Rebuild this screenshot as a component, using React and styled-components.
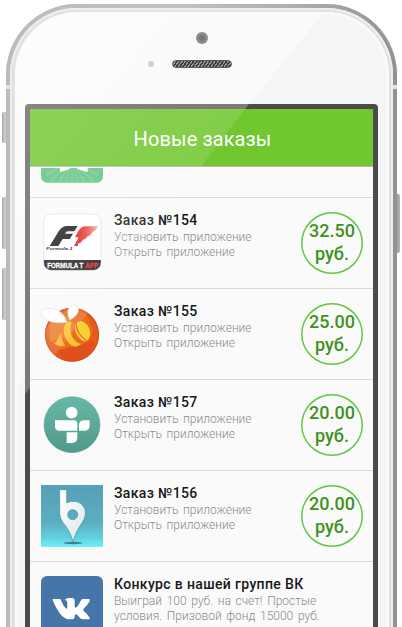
import React from "react";
import styled, { createGlobalStyle } from "styled-components";

const GlobalStyle = createGlobalStyle`
  html, body { margin: 0; padding: 0; background: #fff; }
  body { overflow: hidden; font-family: Roboto, "Liberation Sans", sans-serif; }
  * { box-sizing: border-box; }
`;

const Stage = styled.main`
  position: relative;
  width: 402px;
  height: 627px;
  padding: 4px 5px 0 6px;
  overflow: hidden;
  background: #fff;
`;

const SideButton = styled.i`
  position: absolute;
  ${(p) => (p.$right ? "right: 2px;" : "left: 2px;")}
  top: ${(p) => p.$top}px;
  width: 6px;
  height: ${(p) => p.$height}px;
  border-radius: 2px;
  background: ${(p) =>
    p.$right
      ? "linear-gradient(to left, #b4b4b4, #898989)"
      : "linear-gradient(to right, #a4a4a4, #d2d2d2 50%, #999)"};
`;

const Antenna = styled.i`
  position: absolute;
  ${(p) => (p.$right ? "right: 5px;" : "left: 6px;")}
  top: 85px;
  width: 4px;
  height: 4px;
  background: #e2e2e2;
`;

const Shell = styled.div`
  position: relative;
  height: 700px;
  padding: 4px 4px 0;
  border-radius: 71px 71px 0 0;
  background: linear-gradient(to right, #bcbcbc, #c2c2c2 45%, #adadad 75%, #929292);
  box-shadow: inset 0 0 1px #999;
`;

const Rim = styled.div`
  height: 100%;
  padding: 4px 4px 0 5px;
  border-radius: 67px 67px 0 0;
  background: #e4e4e4;
  box-shadow: inset 0 0 0 2px #eeeeee, inset 0 0 0 3px #dedede;
`;

const Face = styled.div`
  height: 100%;
  padding: 0 10px;
  border-radius: 63px 63px 0 0;
  background: linear-gradient(129.2deg, #fcfcfc 0, #fafafa 239px, #f5f5f5 240.5px);
  box-shadow: inset 0 0 3px 2px #fcfcfc;
`;

const Sensors = styled.div`
  display: grid;
  grid-template: 12px 1fr / 1fr 60px 1fr;
  height: 92px;
  padding-top: 20px;
  row-gap: 13px;
  justify-items: center;
`;

const Camera = styled.span`
  grid-area: 1 / 2;
  width: 12px;
  height: 12px;
  border-radius: 50%;
  background: radial-gradient(circle, #777 0 2px, #8b8b8b 4px, #949494);
`;

const Proximity = styled.span`
  grid-area: 2 / 1;
  justify-self: end;
  width: 6px;
  height: 6px;
  margin: 4px 18px 0 0;
  border-radius: 50%;
  background: #d2d2d2;
`;

const Speaker = styled.span`
  grid-area: 2 / 2;
  width: 60px;
  height: 8px;
  margin-top: 3px;
  border: 1px solid #5c5c5c;
  border-radius: 4px;
  background: repeating-linear-gradient(125deg, #3c3c3c 0 1.5px, #9a9a9a 1.5px 2.7px);
`;

const Bezel = styled.div`
  width: 353px;
  height: 560px;
  padding: 5px 5px 0;
  border-radius: 4px 4px 0 0;
  background: #4b4b4b;
`;

const Screen = styled.div`
  height: 555px;
  overflow: hidden;
  background: #fafafa;
`;

const Header = styled.header`
  position: relative;
  z-index: 1;
  display: flex;
  align-items: center;
  justify-content: center;
  height: 58px;
  background: #71c72f;
  border-bottom: 1px solid #b8b3bd;
  box-shadow: 0 1px 0 #fff;
`;

const HeaderTitle = styled.h1`
  margin: 3px 0 0 2px;
  color: #fff;
  font-size: 20px;
  font-weight: 400;
  letter-spacing: 0.1px;
  line-height: 24px;
  white-space: nowrap;
`;

const List = styled.ul`
  margin: -60px 0 0;
  padding: 0;
  list-style: none;
`;

const Row = styled.li`
  display: flex;
  height: 91px;
  padding: 14px 10px 0 11px;
  border-bottom: 1px solid #dcd7d5;
`;

const Icon = styled.svg`
  flex: none;
  width: 62px;
  height: 62px;
`;

const Details = styled.div`
  flex: 1;
  min-width: 0;
  padding-left: 11px;
`;

const OrderTitle = styled.h2`
  margin: 0 0 2px;
  color: #181818;
  font-size: 14px;
  font-weight: 500;
  letter-spacing: 0.35px;
  line-height: 16px;
  white-space: nowrap;
`;

const Task = styled.p`
  margin: 0;
  color: #8a8a8a;
  font-size: 12px;
  font-weight: 300;
  word-spacing: 1.7px;
  line-height: 15px;
  white-space: nowrap;
`;

const Price = styled.div`
  flex: none;
  width: 62px;
  height: 62px;
  padding-top: 7px;
  box-shadow: inset 0 0 0 1.5px #62c744;
  border-radius: 50%;
  color: #3f9220;
  font-size: 18px;
  font-weight: 500;
  line-height: 23px;
  text-align: center;
`;

const Glare = styled.div`
  position: absolute;
  z-index: 2;
  left: 25px;
  top: 104px;
  width: 224px;
  height: 290px;
  pointer-events: none;
  clip-path: polygon(0 0, 100% 0, 0 100%);
  background: linear-gradient(128deg, rgba(255, 255, 255, 0.2), rgba(255, 255, 255, 0.1) 62%);
`;

const BezelGlare = styled(Glare)`
  clip-path: polygon(0 0, 100% 0, 98.3% 1.72%, 5px 1.72%, 5px 97.8%, 0 100%);
  border-radius: 4px 0 0 0;
  background: rgba(255, 255, 255, 0.16);
`;

const SunburstIcon = () => (
  <Icon viewBox="123 78 186 186">
    <rect x="123" y="78" width="186" height="185" rx="18" fill="#5fc282" />
    {[-75, -60, -45, -30, -15, 0, 15, 30, 45, 60, 75].map((a) => (
      <path key={a} d="M216 195l-4 90h8z" fill="#83d09a" opacity=".6" transform={`rotate(${a} 216 195)`} />
    ))}
    <path d="M177 190H263V231Q240 227 220 215Q202 227 180 231Z" fill="#fff" />
  </Icon>
);

const FormulaIcon = () => (
  <Icon viewBox="123 36 186 186">
    <defs>
      <clipPath id="f1tile"><rect x="131" y="42" width="172" height="169" rx="23" /></clipPath>
      <linearGradient id="f1red"><stop offset="0" stopColor="#d91c17" /><stop offset=".5" stopColor="#e5473c" /><stop offset="1" stopColor="#f6b7ae" /></linearGradient>
    </defs>
    <g clipPath="url(#f1tile)">
      <rect x="130" y="41" width="174" height="171" fill="#fff" />
      <rect x="130" y="180" width="174" height="32" fill="#272528" />
    </g>
    <rect x="131" y="42" width="172" height="169" rx="23" fill="none" stroke="#ccc" strokeWidth="1.5" />
    <path d="M149 138L176 94Q186 78 202 78H233L223 94H204Q198 94 195 101H219L209 117H188L175 138Z" fill="#242225" />
    <path d="M222 138L236 112H225L235 94Q243 79 256 79H295L283 94H280L269 107H265L255 118H251L240 130H234V138Z" fill="url(#f1red)" />
    <text x="138" y="151" textLength="80" lengthAdjust="spacingAndGlyphs" fontFamily="Liberation Sans" fontStyle="italic" fontWeight="700" fontSize="13" fill="#222">Formula 1</text>
    <text x="142" y="203" textLength="108" lengthAdjust="spacingAndGlyphs" fontFamily="Liberation Sans" fontWeight="700" fontSize="20" stroke="#fff" strokeWidth=".8" fill="#fff">FORMULA T</text>
    <text x="256" y="203" textLength="39" lengthAdjust="spacingAndGlyphs" fontFamily="Liberation Sans" fontWeight="700" fontSize="20" stroke="#e42a2a" strokeWidth=".8" fill="#e42a2a">APP</text>
  </Icon>
);

const BeeIcon = () => (
  <Icon viewBox="123 39 186 186">
    <defs>
      <clipPath id="beeball"><circle cx="216" cy="134" r="81" /></clipPath>
    </defs>
    <g clipPath="url(#beeball)">
      <path d="M130 50h170v170H130z" fill="#e65b1c" />
      <path d="M135 110l80-60 45 20 20 55-40 60-55-5-50-40z" fill="#ea6c22" />
      <path d="M150 95l50-15 32 25-30 32-52 18z" fill="#e98230" />
      <path d="M170 182l115-30-20 55-70 5z" fill="#e1501a" />
    </g>
    <circle cx="216" cy="134" r="79" fill="none" stroke="#d9501b" strokeWidth="4" />
    <path d="M184 127Q183 150 196 168Q178 171 164 161Q173 149 184 127Z" fill="#fbb52b" />
    <path d="M198 99Q187 113 193 135Q201 163 224 170Q238 169 243 162Q232 159 225 152Q205 132 214 95Q205 94 198 99Z" fill="#fcc62e" />
    <ellipse cx="248" cy="123" rx="21" ry="31" transform="rotate(-24 248 123)" fill="#fbd034" />
    <path d="M228 99Q230 134 258 150" stroke="#e8702a" strokeWidth="4" fill="none" />
    <path d="M201 97Q192 62 158 56Q126 51 124 69Q124 86 152 95Q178 101 201 97Z" fill="#fff" stroke="#d7d1cc" strokeWidth="1.5" />
    <path d="M209 90Q195 60 213 48Q230 38 236 56Q236 77 209 90Z" fill="#fff" stroke="#d7d1cc" strokeWidth="1.5" />
  </Icon>
);

const FigureIcon = () => (
  <Icon viewBox="123 42 186 186">
    <defs>
      <linearGradient id="figbg" x2="0" y2="1"><stop stopColor="#67b8a7" /><stop offset="1" stopColor="#519a8c" /></linearGradient>
    </defs>
    <circle cx="216" cy="134" r="84" fill="url(#figbg)" stroke="#519d8e" strokeWidth="1.5" />
    <circle cx="215" cy="98" r="17.5" fill="#fff" />
    <path d="M165 121H222Q232 122 232 132V152H177Q166 151 165 140Z" fill="#fff" />
    <path d="M237 152V135Q238 122 250 121H269V138Q268 151 255 152Z" fill="#fff" />
    <path d="M200 157H232V174Q231 188 217 189H200Z" fill="#fff" />
  </Icon>
);

const PinIcon = () => (
  <Icon viewBox="123 45 186 186">
    <defs>
      <linearGradient id="pinbg" x2="0" y2="1"><stop stopColor="#56a0b8" /><stop offset=".6" stopColor="#5cadbf" /><stop offset=".85" stopColor="#61d0df" /><stop offset="1" stopColor="#70f0fa" /></linearGradient>
      <linearGradient id="pinfg" x2="1" y2="1"><stop stopColor="#fff" /><stop offset="1" stopColor="#dce7ea" /></linearGradient>
    </defs>
    <rect x="123" y="45" width="186" height="186" fill="url(#pinbg)" />
    <ellipse cx="219" cy="219" rx="29" ry="3.5" fill="#397f91" />
    <path fillRule="evenodd" d="M179 59H200V98Q232 87 249 107Q264 127 249 154Q226 186 219 215Q211 183 189 158Q179 145 179 130ZM218 119a15 15 0 1 0 .1 0Z" fill="url(#pinfg)" stroke="#478d9d" strokeWidth="2" />
  </Icon>
);

const VkIcon = () => (
  <Icon viewBox="123 318 186 186">
    <rect x="123" y="318" width="186" height="186" rx="18" fill="#4575a9" />
    <path d="M159 387H179Q182 387 183 391Q189 407 197 415Q202 419 202 411V399Q202 391 195 389Q198 384 207 384H218Q224 384 224 392V409Q225 417 231 410Q238 402 243 391Q245 387 250 387H267Q271 388 269 394Q263 405 251 416Q247 420 252 424Q264 434 269 443Q271 448 264 448H247Q242 448 233 436Q225 428 224 439Q224 448 217 448H208Q193 447 180 431Q167 414 158 391Q157 387 159 387Z" fill="#fff" />
  </Icon>
);

const APP_TASKS = ["Установить приложение", "Открыть приложение"];

const ORDERS = [
  { icon: FormulaIcon, title: "Заказ №154", tasks: APP_TASKS, price: "32.50" },
  { icon: BeeIcon, title: "Заказ №155", tasks: APP_TASKS, price: "25.00" },
  { icon: FigureIcon, title: "Заказ №157", tasks: APP_TASKS, price: "20.00" },
  { icon: PinIcon, title: "Заказ №156", tasks: APP_TASKS, price: "20.00" },
  {
    icon: VkIcon,
    title: "Конкурс в нашей группе ВК",
    tasks: ["Выиграй 100 руб. на счет! Простые", "условия. Призовой фонд 15000 руб."],
  },
];

function OrderRow({ order }) {
  const Glyph = order.icon;
  return (
    <Row>
      <Glyph />
      <Details>
        <OrderTitle>{order.title}</OrderTitle>
        {order.tasks.map((t) => (
          <Task key={t}>{t}</Task>
        ))}
      </Details>
      {order.price && (
        <Price>
          {order.price}
          <br />
          руб.
        </Price>
      )}
    </Row>
  );
}

export default function App() {
  return (
    <Stage>
      <GlobalStyle />
      <SideButton $top={112} $height={31} />
      <SideButton $top={197} $height={52} />
      <SideButton $top={268} $height={52} />
      <SideButton $right $top={194} $height={59} />
      <Shell>
        <Rim>
          <Face>
            <Sensors>
              <Camera />
              <Proximity />
              <Speaker />
            </Sensors>
            <Bezel>
              <Screen>
                <Header>
                  <HeaderTitle>Новые заказы</HeaderTitle>
                </Header>
                <List>
                  <Row>
                    <SunburstIcon />
                  </Row>
                  {ORDERS.map((o) => (
                    <OrderRow key={o.title} order={o} />
                  ))}
                </List>
              </Screen>
            </Bezel>
          </Face>
        </Rim>
      </Shell>
      <Antenna />
      <Antenna $right />
      <Glare />
      <BezelGlare />
    </Stage>
  );
}
